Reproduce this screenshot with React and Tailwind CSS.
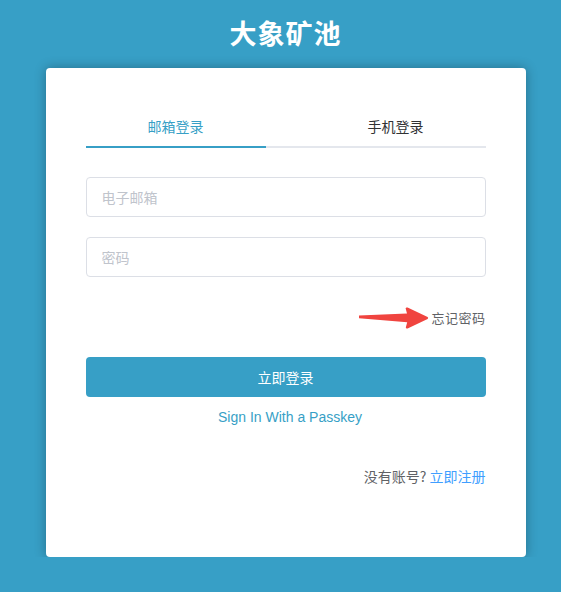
import React, { useState } from "react";

const font = { fontFamily: '"Noto Sans CJK SC", "Liberation Sans", sans-serif' };

function Arrow() {
  return (
    <svg width="70" height="22" viewBox="0 0 70 22" className="block">
      <path
        d="M0 8.6 L48 6.6 L46.6 1.2 Q47 0 48.6 0.6 L68.6 10 Q69.8 11 68.6 12 L48.6 21.4 Q47 22 46.8 20.6 L48.2 15.2 L0 11.2 Z"
        fill="#f0443f"
      />
    </svg>
  );
}

export default function App() {
  const [tab, setTab] = useState("email");

  return (
    <div className="min-h-screen w-full bg-[#379fc6] flex flex-col items-center pl-[10px]" style={font}>
      <h1 className="text-[27px] leading-[27px] font-bold text-white tracking-[1px] mt-[19px] mb-[22px]">
        大象矿池
      </h1>

      <div className="overflow-hidden px-[12px] pt-[12px] -mt-[12px]">
        <div className="w-[480px] h-[489px] bg-white rounded-[4px] shadow-[0_0_12px_rgba(0,0,0,0.3)] px-[40px] pt-[48px]">
          <div className="flex border-b-2 border-[#e4e7ed] h-[32px]">
            <button
              onClick={() => setTab("email")}
              className={`w-[180px] -mb-[2px] text-[14px] leading-[20px] pb-[10px] border-b-2 ${
                tab === "email" ? "text-[#379fc6] border-[#379fc6]" : "text-[#303133] border-transparent"
              }`}
            >
              邮箱登录
            </button>
            <button
              onClick={() => setTab("phone")}
              className={`flex-1 pl-[40px] -mb-[2px] text-[14px] leading-[20px] pb-[10px] border-b-2 ${
                tab === "phone" ? "text-[#379fc6] border-[#379fc6]" : "text-[#303133] border-transparent"
              }`}
            >
              手机登录
            </button>
          </div>

          <div className="mt-[29px] flex flex-col gap-[20px]">
            <input
              placeholder={tab === "email" ? "电子邮箱" : "手机号码"}
              className="h-[40px] w-full border border-[#dcdfe6] rounded-[4px] px-[15px] text-[14px] text-[#606266] placeholder:text-[#c0c4cc] outline-none"
            />
            <input
              type="password"
              placeholder="密码"
              className="h-[40px] w-full border border-[#dcdfe6] rounded-[4px] px-[15px] text-[14px] text-[#606266] placeholder:text-[#c0c4cc] outline-none"
            />
          </div>

          <div className="mt-[30px] flex justify-end items-center gap-[2px] h-[22px]">
            <Arrow />
            <span className="text-[13px] text-[#606266] tracking-[0.5px]">忘记密码</span>
          </div>

          <button className="mt-[28px] w-full h-[40px] rounded-[4px] bg-[#379fc6] text-white text-[14px]">
            立即登录
          </button>

          <div className="mt-[6px] text-center pl-[9px]">
            <a className="text-[14px] text-[#379fc6] cursor-pointer" style={{ fontFamily: '"Liberation Sans", sans-serif' }}>
              Sign In With a Passkey
            </a>
          </div>

          <div className="mt-[38px] text-right text-[14px] text-[#606266]">
            没有账号? <a className="text-[#409eff] cursor-pointer">立即注册</a>
          </div>
        </div>
      </div>
    </div>
  );
}
